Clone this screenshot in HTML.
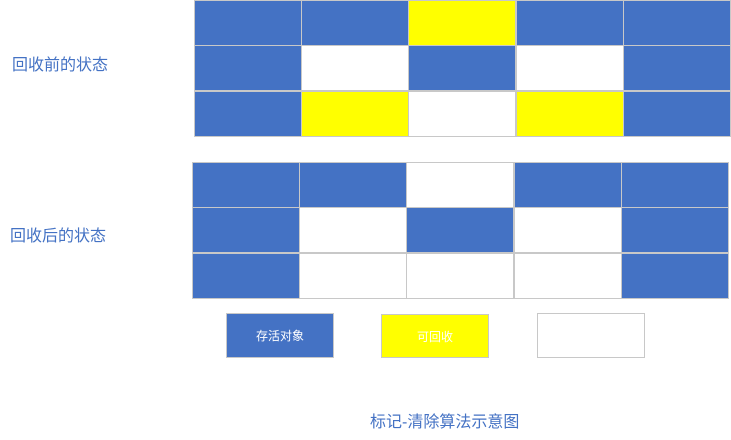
<html><head><style>
body{margin:0;width:731px;height:440px;background:#fff;position:relative;font-family:"Liberation Sans","Noto Sans CJK SC",sans-serif;overflow:hidden}
.c{position:absolute;box-sizing:border-box;border:1px solid #c8c8c8}
.b{background:#4472c4}.y{background:#ffff00}.w{background:#fff}
.t{position:absolute;color:#4472c4;font-size:16px;white-space:nowrap}
.l{position:absolute;box-sizing:border-box;border:1px solid #c8c8c8;color:#fff;font-size:12px;display:flex;align-items:center;justify-content:center}
</style></head><body>
<div class="t" style="left:12px;top:51px">回收前的状态</div>
<div class="t" style="left:10px;top:222px">回收后的状态</div>
<script>
function grid(x0,y0,rows){rows.forEach((r,i)=>{[...r].forEach((k,j)=>{var d=document.createElement('div');d.className='c '+k;d.style.left=(x0+j*107.2)+'px';d.style.top=(y0+i*45.3)+'px';d.style.width='108px';d.style.height='46px';document.body.appendChild(d);});});}
grid(194,0,['bbybb','bwbwb','bywyb']);
grid(192,162,['bbwbb','bwbwb','bwwwb']);
</script>
<div class="l b" style="left:226px;top:313px;width:108px;height:45px">存活对象</div>
<div class="l y" style="left:381px;top:314px;width:108px;height:44px">可回收</div>
<div class="l w" style="left:537px;top:313px;width:108px;height:45px"></div>
<div class="t" style="left:370px;top:408px">标记-清除算法示意图</div>
</body></html>
